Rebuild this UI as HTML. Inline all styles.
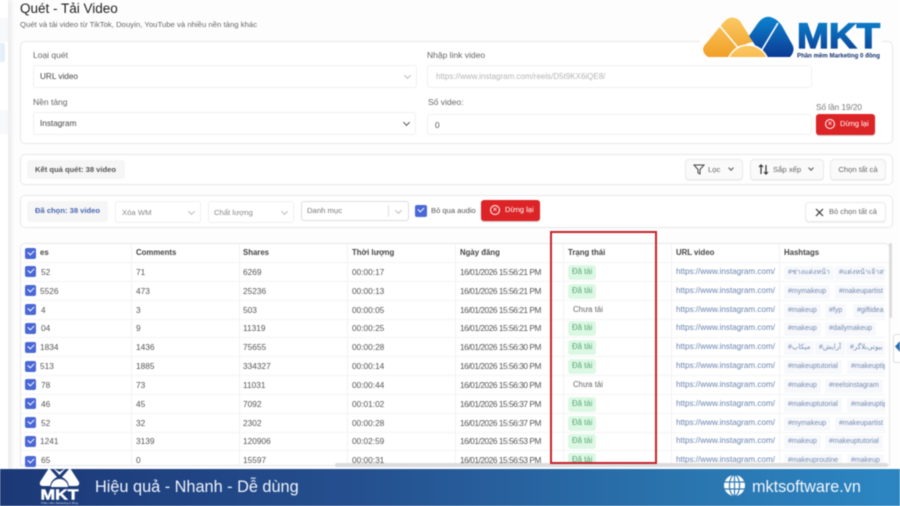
<!DOCTYPE html>
<html lang="vi"><head><meta charset="utf-8"><title>Quét - Tải Video</title>
<style>
*{box-sizing:border-box;margin:0;padding:0}
html,body{width:900px;height:506px;overflow:hidden;background:#fff}
body{font-family:"Liberation Sans","DejaVu Sans",sans-serif;color:#333;position:relative}
#app{position:absolute;left:0;top:0;width:900px;height:506px;filter:blur(.45px);background:#fdfdfd}
.a{position:absolute;white-space:nowrap}
.side{position:absolute;left:0;top:0;width:9px;height:470px;background:#fff;border-right:1px solid #f0f0f0;box-shadow:2px 0 5px #e8e8e8}
.card{position:absolute;background:#fff;border:1px solid #e8e8e8;border-radius:5px}
.lbl{font-size:8.5px;color:#666;position:absolute;white-space:nowrap}
.inp{position:absolute;background:#fff;border:1px solid #f0f0f0;border-radius:3px;font-size:7.7px;color:#555;line-height:21px;padding-left:5px;white-space:nowrap}
.chev{position:absolute;width:5px;height:5px;border-right:1px solid #555;border-bottom:1px solid #555;transform:rotate(45deg)}
.lt{border-color:#bbb}
.red{position:absolute;background:#dc2427;border-radius:3px;color:#fff;font-size:7.6px;width:59px;height:21px;line-height:20px;padding-left:24px;box-shadow:0 1px 1px #ccc}
.red i{position:absolute;left:9px;top:5px;width:10px;height:10px;border:1px solid #fff;border-radius:50%;font:normal 8px/8px "Liberation Sans",sans-serif;text-align:center}
.btn{position:absolute;background:#fafafa;border:1px solid #eaeaea;border-radius:4px;font-size:7.7px;color:#666;line-height:20px;white-space:nowrap;box-shadow:0 1px 1px #eee}
.chip{position:absolute;background:#f6f6f6;border-radius:3px;font-size:7.6px;font-weight:bold;line-height:19px;white-space:nowrap}
#tbl{position:absolute;left:20px;top:243px;width:870px;height:223px;background:#fff;border:1px solid #e8e8e8;border-radius:5px 5px 0 0;overflow:hidden}
.r{position:absolute;left:0;width:870px;height:19px;border-bottom:1px solid #f4f4f4;font-size:8.3px;line-height:18px;color:#555}
.r span{position:absolute;top:0;white-space:nowrap}
.h{font-weight:bold;color:#444;font-size:7.8px}
.c1{left:115px}.c2{left:222px}.c3{left:331px}.c4{left:439px;letter-spacing:-.45px}.c5{left:547px}.c6{left:655px;color:#6a85b0;font-size:8.1px}
.ok{left:547px;top:2px!important;height:15px;line-height:14px;padding:0 4px;background:#dcf8e4;border-radius:3px;color:#5aa874;font-size:7.8px}
.no{left:552px;color:#666;font-size:7.8px}
.t{color:#7189b0;font-size:7px;background:#f7f8fb;height:14px;line-height:14px;padding:0 4px;top:3px!important;border-radius:2px}
.vl{position:absolute;top:0;width:1px;height:222px;background:#f2f2f2}
.cb{position:absolute;width:11px;height:11px;background:#4a67d6;border-radius:2px}
.cb:after,.ck:after{content:"";position:absolute;left:3px;top:2px;width:5px;height:3px;border-left:1.3px solid #fff;border-bottom:1.3px solid #fff;transform:rotate(-45deg)}
#foot{position:absolute;left:0;top:469px;width:900px;height:37px;background:linear-gradient(90deg,#1c3877 0%,#25508f 40%,#2a74ae 75%,#2c86c2 100%);color:#fff}
</style></head><body>
<div id="app">
<div class="side"></div>
<div class="a" style="left:0;top:18px;width:8px;height:24px;background:#f7f8fa"></div>
<div class="a" style="left:0;top:43px;width:5px;height:19px;background:#e6eefa;border-radius:0 2px 2px 0"></div>
<div class="a" style="left:0;top:110px;width:8px;height:24px;background:#f7f8fa"></div>

<div class="a" style="left:20px;top:0;font-size:13.5px;line-height:18px;color:#222">Quét - Tải Video</div>
<div class="a" style="left:20px;top:19px;font-size:7.75px;line-height:11px;color:#666">Quét và tải video từ TikTok, Douyin, YouTube và nhiều nền tảng khác</div>

<div class="card" style="left:20px;top:41px;width:873px;height:103px"></div>
<div class="lbl" style="left:33px;top:50px">Loại quét</div>
<div class="inp" style="left:33px;top:65px;width:384px;height:23px;font-size:8.2px;color:#444;padding-left:6px">URL video</div>
<div class="chev lt" style="left:405px;top:73px"></div>
<div class="lbl" style="left:427px;top:50px">Nhập link video</div>
<div class="inp" style="left:427px;top:65px;width:385px;height:23px;color:#b5b5b5;font-size:8px;padding-left:8px">https://www.instagram.com/reels/D5t9KX6iQE8/</div>
<div class="lbl" style="left:33px;top:97px">Nền tảng</div>
<div class="inp" style="left:33px;top:112px;width:383px;height:23px;font-size:8.2px;color:#444;padding-left:6px">Instagram</div>
<div class="chev" style="left:404px;top:120px"></div>
<div class="lbl" style="left:428px;top:97px">Số video:</div>
<div class="inp" style="left:427px;top:114px;width:385px;height:21px;padding-left:7px;line-height:20px;font-size:8.3px">0</div>
<div class="lbl" style="left:816px;top:103px;color:#777;font-size:8.2px">Số lần 19/20</div>
<div class="red" style="left:816px;top:114px"><i>×</i>Dừng lại</div>

<div class="card" style="left:20px;top:154px;width:873px;height:31px"></div>
<div class="chip" style="left:27px;top:160px;width:98px;padding-left:8px;color:#555">Kết quả quét: 38 video</div>
<div class="btn" style="left:685px;top:159px;width:58px;height:21px;padding-left:22px">Lọc</div>
<svg class="a" style="left:693px;top:164px" width="12" height="11" viewBox="0 0 12 11"><path d="M1 1h10L7 5.5V10L5 9V5.5z" fill="none" stroke="#444" stroke-width="1"/></svg>
<div class="chev" style="left:729px;top:166px;width:4px;height:4px"></div>
<div class="btn" style="left:750px;top:159px;width:74px;height:21px;padding-left:22px">Sắp xếp</div>
<svg class="a" style="left:758px;top:164px" width="11" height="11" viewBox="0 0 11 11"><path d="M3 10V1M1 3l2-2 2 2M8 1v9M6 8l2 2 2-2" fill="none" stroke="#333" stroke-width="1.2"/></svg>
<div class="chev" style="left:809px;top:166px;width:4px;height:4px"></div>
<div class="btn" style="left:830px;top:159px;width:56px;height:21px;text-align:center">Chọn tất cả</div>

<div class="card" style="left:20px;top:195px;width:873px;height:33px"></div>
<div class="chip" style="left:27px;top:201px;width:81px;height:21px;line-height:20px;padding-left:8px;color:#4a67b0">Đã chọn: 38 video</div>
<div class="inp" style="left:115px;top:201px;width:86px;height:22px;color:#888;padding-left:6px">Xóa WM</div>
<div class="chev lt" style="left:189px;top:209px"></div>
<div class="inp" style="left:208px;top:201px;width:86px;height:22px;color:#888;padding-left:5px">Chất lượng</div>
<div class="chev lt" style="left:282px;top:209px"></div>
<div class="inp" style="left:301px;top:201px;width:108px;height:20px;border-color:#ddd;color:#777;line-height:18px;padding-left:5px">Danh mục</div>
<div class="a" style="left:388px;top:205px;width:1px;height:12px;background:#ddd"></div>
<div class="chev lt" style="left:396px;top:208px"></div>
<div class="ck a" style="left:415px;top:205px;width:12px;height:12px;background:#4a67d6;border-radius:2px"></div>
<div class="a" style="left:431px;top:205px;font-size:7.6px;line-height:12px;color:#555">Bỏ qua audio</div>
<div class="red" style="left:481px;top:200px"><i>×</i>Dừng lại</div>
<div class="btn" style="left:805px;top:202px;width:81px;height:20px;background:#fff;padding-left:23px;line-height:18px;font-size:7.5px">Bỏ chọn tất cả</div>
<svg class="a" style="left:815px;top:208px" width="9" height="9" viewBox="0 0 9 9"><path d="M1 1l7 7M8 1L1 8" stroke="#333" stroke-width="1.2"/></svg>

<div id="tbl">
<div class="vl" style="left:110px"></div><div class="vl" style="left:218px"></div><div class="vl" style="left:326px"></div><div class="vl" style="left:434px"></div><div class="vl" style="left:542px"></div><div class="vl" style="left:650px"></div><div class="vl" style="left:758px"></div>

<div class="r h" style="top:0"><span style="left:19px">es</span><span class="c1">Comments</span><span class="c2">Shares</span><span class="c3">Thời lượng</span><span class="c4" style="letter-spacing:0">Ngày đăng</span><span class="c5">Trạng thái</span><span style="left:655px">URL video</span><span style="left:763px">Hashtags</span></div>

<div class="r" style="top:19px"><span style="left:20px">52</span><span class="c1">71</span><span class="c2">6269</span><span class="c3">00:00:17</span><span class="c4">16/01/2026 15:56:21 PM</span><span class="ok">Đã tải</span><span class="c6">https://www.instagram.com/</span><span class="t" style="left:763px">#ช่างแต่งหน้า</span><span class="t" style="left:814px">#แต่งหน้าเจ้าสาว</span></div>
<div class="r" style="top:38px"><span style="left:19px">5526</span><span class="c1">473</span><span class="c2">25236</span><span class="c3">00:00:13</span><span class="c4">16/01/2026 15:56:21 PM</span><span class="ok">Đã tải</span><span class="c6">https://www.instagram.com/</span><span class="t" style="left:763px">#mymakeup</span><span class="t" style="left:814px">#makeupartist</span></div>
<div class="r" style="top:57px"><span style="left:20px">4</span><span class="c1">3</span><span class="c2">503</span><span class="c3">00:00:05</span><span class="c4">16/01/2026 15:56:21 PM</span><span class="no">Chưa tải</span><span class="c6">https://www.instagram.com/</span><span class="t" style="left:763px">#makeup</span><span class="t" style="left:804px">#fyp</span><span class="t" style="left:832px">#giftidea</span></div>
<div class="r" style="top:75px"><span style="left:20px">04</span><span class="c1">9</span><span class="c2">11319</span><span class="c3">00:00:25</span><span class="c4">16/01/2026 15:56:21 PM</span><span class="ok">Đã tải</span><span class="c6">https://www.instagram.com/</span><span class="t" style="left:763px">#makeup</span><span class="t" style="left:804px">#dailymakeup</span></div>
<div class="r" style="top:94px"><span style="left:19px">1834</span><span class="c1">1436</span><span class="c2">75655</span><span class="c3">00:00:28</span><span class="c4">16/01/2026 15:56:30 PM</span><span class="ok">Đã tải</span><span class="c6">https://www.instagram.com/</span><span class="t" style="left:763px">#میکاپ</span><span class="t" style="left:794px">#آرایش</span><span class="t" style="left:825px">#بیوتی‌بلاگر</span></div>
<div class="r" style="top:113px"><span style="left:19px">513</span><span class="c1">1885</span><span class="c2">334327</span><span class="c3">00:00:14</span><span class="c4">16/01/2026 15:56:30 PM</span><span class="ok">Đã tải</span><span class="c6">https://www.instagram.com/</span><span class="t" style="left:763px">#makeuptutorial</span><span class="t" style="left:826px">#makeuptips</span></div>
<div class="r" style="top:132px"><span style="left:20px">78</span><span class="c1">73</span><span class="c2">11031</span><span class="c3">00:00:44</span><span class="c4">16/01/2026 15:56:30 PM</span><span class="no">Chưa tải</span><span class="c6">https://www.instagram.com/</span><span class="t" style="left:763px">#makeup</span><span class="t" style="left:804px">#reelsinstagram</span></div>
<div class="r" style="top:151px"><span style="left:20px">46</span><span class="c1">45</span><span class="c2">7092</span><span class="c3">00:01:02</span><span class="c4">16/01/2026 15:56:37 PM</span><span class="ok">Đã tải</span><span class="c6">https://www.instagram.com/</span><span class="t" style="left:763px">#makeuptutorial</span><span class="t" style="left:826px">#makeuptips</span></div>
<div class="r" style="top:170px"><span style="left:20px">52</span><span class="c1">32</span><span class="c2">2302</span><span class="c3">00:00:28</span><span class="c4">16/01/2026 15:56:37 PM</span><span class="ok">Đã tải</span><span class="c6">https://www.instagram.com/</span><span class="t" style="left:763px">#mymakeup</span><span class="t" style="left:814px">#makeupartist</span></div>
<div class="r" style="top:188px"><span style="left:19px">1241</span><span class="c1">3139</span><span class="c2">120906</span><span class="c3">00:02:59</span><span class="c4">16/01/2026 15:56:53 PM</span><span class="ok">Đã tải</span><span class="c6">https://www.instagram.com/</span><span class="t" style="left:763px">#makeup</span><span class="t" style="left:804px">#makeuptutorial</span></div>
<div class="r" style="top:207px"><span style="left:20px">65</span><span class="c1">0</span><span class="c2">15597</span><span class="c3">00:00:31</span><span class="c4">16/01/2026 15:56:53 PM</span><span class="ok">Đã tải</span><span class="c6">https://www.instagram.com/</span><span class="t" style="left:763px">#makeuproutine</span><span class="t" style="left:826px">#makeup</span></div>
<div class="a" style="left:864px;top:19px;width:6px;height:204px;background:#fff"></div>
</div>
<div class="cb a" style="left:25px;top:248px"></div>
<div class="cb a" style="left:25px;top:266px"></div>
<div class="cb a" style="left:25px;top:285px"></div>
<div class="cb a" style="left:25px;top:304px"></div>
<div class="cb a" style="left:25px;top:323px"></div>
<div class="cb a" style="left:25px;top:342px"></div>
<div class="cb a" style="left:25px;top:361px"></div>
<div class="cb a" style="left:25px;top:379px"></div>
<div class="cb a" style="left:25px;top:398px"></div>
<div class="cb a" style="left:25px;top:417px"></div>
<div class="cb a" style="left:25px;top:436px"></div>
<div class="cb a" style="left:25px;top:456px"></div>

<div class="a" style="left:335px;top:463px;width:553px;height:4px;background:#dcdcdc;border-radius:2px"></div>
<div class="a" style="left:889px;top:243px;width:3px;height:75px;background:#dcdcdc;border-radius:2px"></div>
<div class="a" style="left:550px;top:231px;width:107px;height:233px;border:2px solid #c5222b"></div>
<div class="a" style="left:893px;top:334px;width:7px;height:29px;background:#fff;border:1px solid #ddd;border-right:0;border-radius:3px 0 0 3px"></div>
<svg class="a" style="left:895px;top:341px" width="5" height="11" viewBox="0 0 5 11"><path d="M0 5.5L5 0v11z" fill="#2a6fb0"/></svg>

<div class="a" style="left:700px;top:38px;width:182px;height:8px;background:#fff"></div>
<svg class="a" style="left:700px;top:14px" width="190" height="46" viewBox="700 14 190 46">
<defs>
<linearGradient id="go" x1="0" y1="0" x2="0" y2="1"><stop offset="0" stop-color="#fbc963"/><stop offset="1" stop-color="#f19f26"/></linearGradient>
<linearGradient id="gb" x1="0" y1="0" x2="0" y2="1"><stop offset="0" stop-color="#0d83d0"/><stop offset="1" stop-color="#0b3a92"/></linearGradient>
<linearGradient id="gt" x1="0" y1="0" x2="0" y2="1"><stop offset="0" stop-color="#0c86cf"/><stop offset="1" stop-color="#0b3b92"/></linearGradient>
<clipPath id="cp"><rect x="700" y="14" width="190" height="43"/></clipPath>
</defs>
<g clip-path="url(#cp)">
<path d="M723 23Q731 13 740 21L753 42Q740 44 731 57H708Q701 52 704 46z" fill="url(#go)"/>
<path d="M719 25L740 50" stroke="#fff" stroke-width="1.6" fill="none"/>
<path d="M749 36L758 23Q765 14 773 18Q778 20 782 26L792 44Q796 50 790 57H763z" fill="url(#gb)"/>
<path d="M778 23L760 53" stroke="#fff" stroke-width="1.6" fill="none"/>
<circle cx="748" cy="66" r="21" fill="url(#go)" stroke="#fff" stroke-width="1.4"/>
</g>
<text x="797" y="48" font-family="Liberation Sans" font-weight="bold" font-size="35" textLength="83" lengthAdjust="spacingAndGlyphs" fill="url(#gt)" stroke="url(#gt)" stroke-width="1.3">MKT</text>
<text x="797" y="57.5" font-family="Liberation Sans" font-weight="bold" font-size="6" textLength="83" lengthAdjust="spacingAndGlyphs" fill="#12306e">Phần mềm Marketing 0 đồng</text>
</svg>

<div id="foot">
<svg class="a" style="left:39px;top:-1px" width="41" height="38" viewBox="0 0 41 38">
<path d="M10 0L1 14Q0 18 4 18H11Q12 12 18 9zM31 0l9 14Q41 18 37 18H30Q29 12 23 9zM14 0l6.500 7L27 0l-6.500 4z" fill="#fff"/>
<path d="M12 19a8.500 8 0 0 1 17 0z" fill="#fff"/>
<text x="1.500" y="31.500" font-family="Liberation Sans" font-weight="bold" font-size="15" textLength="38" lengthAdjust="spacingAndGlyphs" fill="#fff" stroke="#fff" stroke-width=".5">MKT</text>
<text x="2" y="36" font-family="Liberation Sans" font-size="3" textLength="37" lengthAdjust="spacingAndGlyphs" fill="#cfd8ea">Phần mềm Marketing 0 đồng</text>
</svg>
<div class="a" style="left:95px;top:7px;font-size:16.3px;line-height:22px;color:#eef3fb">Hiệu quả - Nhanh - Dễ dùng</div>
<svg class="a" style="left:723px;top:5px" width="23" height="23" viewBox="0 0 23 23"><circle cx="11.5" cy="11.5" r="10.5" fill="#fff"/><g fill="none" stroke="#2c78b4" stroke-width="1.2"><ellipse cx="11.500" cy="11.500" rx="5" ry="10.500"/><path d="M11.500 1v21M1.500 8h20M1.500 15h20"/></g></svg>
<div class="a" style="left:752px;top:6px;font-size:16.2px;line-height:24px;color:#f2f7fc">mktsoftware.vn</div>
</div>
</div>
</body></html>
